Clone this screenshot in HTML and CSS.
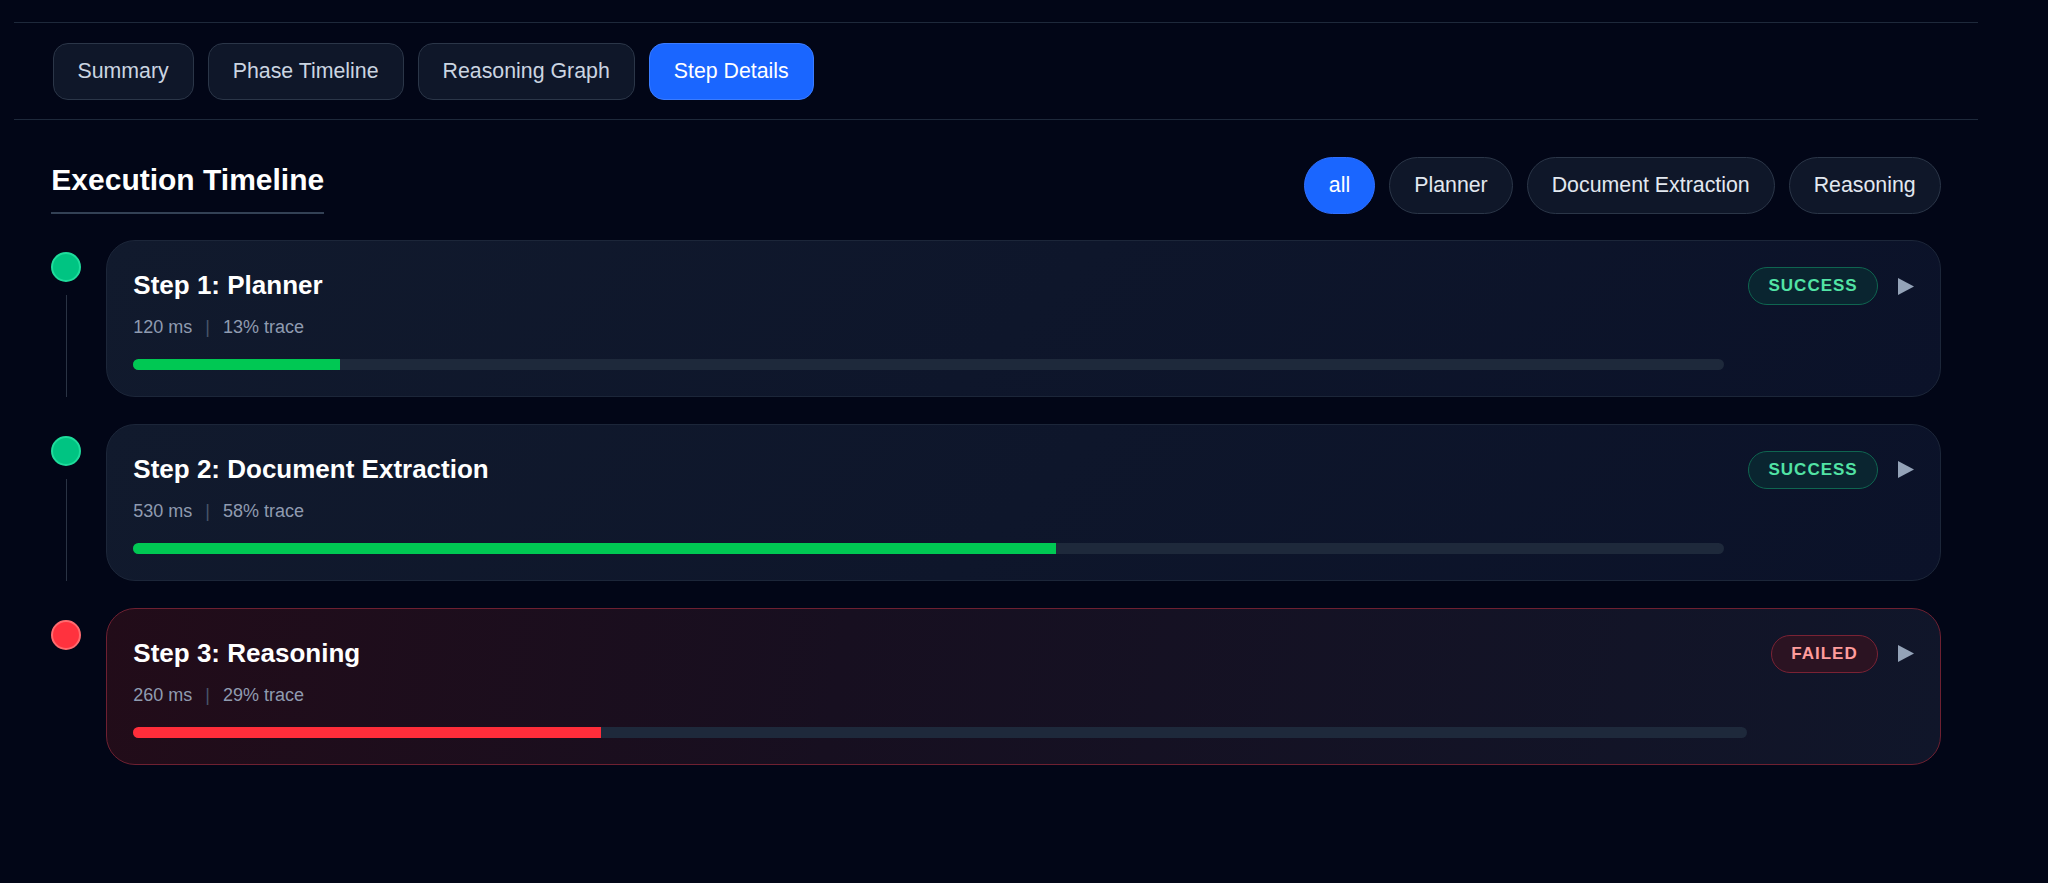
FILE: index.html
```html
<!DOCTYPE html>
<html lang="en">
<head>
<meta charset="utf-8">
<title>Step Details</title>
<link rel="stylesheet" href="styles.css">
</head>
<body>
<div class="app">
  <nav class="tabs">
    <button class="tab">Summary</button>
    <button class="tab">Phase Timeline</button>
    <button class="tab">Reasoning Graph</button>
    <button class="tab active">Step Details</button>
  </nav>

  <section class="panel">
    <div class="panel-head">
      <h2 class="panel-title">Execution Timeline</h2>
      <div class="filters">
        <button class="pill active">all</button>
        <button class="pill">Planner</button>
        <button class="pill">Document Extraction</button>
        <button class="pill">Reasoning</button>
      </div>
    </div>

    <div class="timeline">
      <div class="step">
        <div class="rail"><span class="dot ok"></span><span class="rail-line"></span></div>
        <div class="card">
          <div class="card-main">
            <h3 class="step-title">Step 1: Planner</h3>
            <div class="meta"><span>120 ms</span><span class="sep">|</span><span>13% trace</span></div>
            <div class="bar"><div class="fill ok" style="width:13%"></div></div>
          </div>
          <div class="card-side">
            <span class="badge ok">SUCCESS</span>
            <svg class="chev" width="16" height="17" viewBox="0 0 16 17"><polygon points="0,0 16,8.5 0,17"/></svg>
          </div>
        </div>
      </div>

      <div class="step">
        <div class="rail"><span class="dot ok"></span><span class="rail-line"></span></div>
        <div class="card">
          <div class="card-main">
            <h3 class="step-title">Step 2: Document Extraction</h3>
            <div class="meta"><span>530 ms</span><span class="sep">|</span><span>58% trace</span></div>
            <div class="bar"><div class="fill ok" style="width:58%"></div></div>
          </div>
          <div class="card-side">
            <span class="badge ok">SUCCESS</span>
            <svg class="chev" width="16" height="17" viewBox="0 0 16 17"><polygon points="0,0 16,8.5 0,17"/></svg>
          </div>
        </div>
      </div>

      <div class="step">
        <div class="rail"><span class="dot fail"></span></div>
        <div class="card failed">
          <div class="card-main">
            <h3 class="step-title">Step 3: Reasoning</h3>
            <div class="meta"><span>260 ms</span><span class="sep">|</span><span>29% trace</span></div>
            <div class="bar"><div class="fill fail" style="width:29%"></div></div>
          </div>
          <div class="card-side">
            <span class="badge fail">FAILED</span>
            <svg class="chev" width="16" height="17" viewBox="0 0 16 17"><polygon points="0,0 16,8.5 0,17"/></svg>
          </div>
        </div>
      </div>
    </div>
  </section>
</div>
</body>
</html>
```

FILE: styles.css
```css
* { box-sizing: border-box; }

html, body {
  margin: 0;
  background: #020617;
  font-family: "Liberation Sans", Arial, sans-serif;
  color: #e2e8f0;
}

.app {
  margin-left: 14px;
  width: 1964px;
  padding-top: 22px;
}

.tabs {
  display: flex;
  gap: 14px;
  padding: 20px 37.33px 19px 38.5px;
  border-top: 1px solid #1e293b;
  border-bottom: 1px solid #1e293b;
}

.tab {
  height: 57px;
  padding: 0 24px;
  font-family: inherit;
  font-size: 21.33px;
  color: #cbd5e1;
  background: #0f1729;
  border: 1px solid #2b3648;
  border-radius: 15px;
}

.tab.active {
  background: #1a66ff;
  border-color: #3b7cff;
  color: #ffffff;
}

.panel {
  padding: 37.33px 37.33px;
}

.panel-head {
  display: flex;
  justify-content: space-between;
  align-items: flex-end;
}

.panel-title {
  margin: 0;
  font-size: 30px;
  font-weight: 700;
  line-height: normal;
  color: #ffffff;
  padding-bottom: 15px;
  border-bottom: 2px solid #334155;
}

.filters {
  display: flex;
  gap: 14px;
}

.pill {
  height: 57px;
  padding: 0 24px;
  font-family: inherit;
  font-size: 21.33px;
  color: #e2e8f0;
  background: #0f1729;
  border: 1px solid #2b3648;
  border-radius: 999px;
}

.pill.active {
  background: #1a66ff;
  border-color: #2f6fff;
  color: #ffffff;
}

.timeline {
  margin-top: 26px;
  display: flex;
  flex-direction: column;
  gap: 26.67px;
}

.step {
  display: flex;
  gap: 25px;
}

.rail {
  width: 30px;
  flex: none;
  display: flex;
  flex-direction: column;
  align-items: center;
  padding-top: 12px;
}

.dot {
  width: 30px;
  height: 30px;
  border-radius: 50%;
  flex: none;
}

.dot.ok {
  background: #00c482;
  border: 2px solid #1fdc9c;
}

.dot.fail {
  background: #ff323e;
  border: 2px solid #ff6b6f;
}

.rail-line {
  flex: 1;
  width: 1px;
  margin-top: 13px;
  background: #2a3344;
}

.card {
  flex: 1;
  display: flex;
  gap: 24px;
  padding: 26px;
  border: 1px solid #1c2639;
  border-radius: 29px;
  background: linear-gradient(135deg, #111a2d 0%, #0b1229 100%);
}

.card.failed {
  border-color: #6e2031;
  background: linear-gradient(100deg, #220c19 0%, #170f20 40%, #10162a 100%);
}

.card-main {
  flex: 1;
  min-width: 0;
}

.step-title {
  margin: 0;
  font-size: 26px;
  font-weight: 700;
  line-height: 36px;
  color: #ffffff;
}

.meta {
  margin-top: 11px;
  display: flex;
  gap: 13px;
  font-size: 18px;
  line-height: 27px;
  color: #8f9bb0;
}

.meta .sep {
  color: #475569;
}

.bar {
  margin-top: 18px;
  height: 11px;
  border-radius: 6px;
  background: #1e293b;
  overflow: hidden;
}

.fill {
  height: 100%;
}

.fill.ok { background: #00c853; }
.fill.fail { background: #ff2d3a; }

.card-side {
  display: flex;
  align-items: center;
  gap: 20px;
  height: 38px;
}

.badge {
  display: inline-flex;
  align-items: center;
  height: 38px;
  padding: 0 19px;
  border-radius: 999px;
  font-size: 17px;
  font-weight: 700;
  letter-spacing: 1px;
}

.badge.ok {
  color: #52e3a5;
  background: #0a2530;
  border: 1px solid #0f6550;
}

.badge.fail {
  color: #ff9c9c;
  background: #2b1322;
  border: 1px solid #7a2234;
}

.chev {
  display: block;
  fill: #94a3b8;
}
```
